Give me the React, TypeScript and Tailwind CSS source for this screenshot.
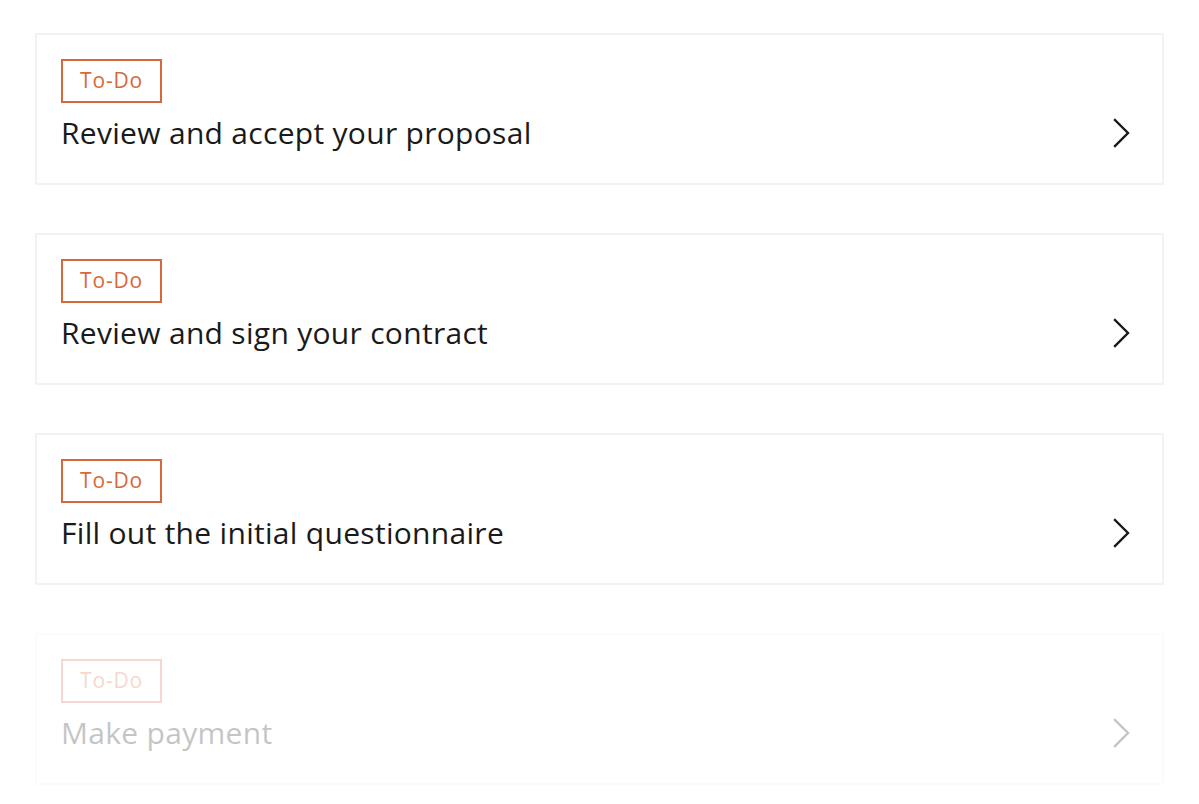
import React from 'react';

type Task = { title: string; disabled?: boolean };

const tasks: Task[] = [
  { title: 'Review and accept your proposal' },
  { title: 'Review and sign your contract' },
  { title: 'Fill out the initial questionnaire' },
  { title: 'Make payment', disabled: true },
];

const Chevron = () => (
  <svg width="20" height="30" viewBox="0 0 20 30" fill="none" className="shrink-0">
    <path d="M3 2 L16 15 L3 28" stroke="#1a1a1a" strokeWidth="2.4" strokeLinecap="square" />
  </svg>
);

const TaskCard = ({ task }: { task: Task }) => (
  <div
    className={
      'border-2 border-[#f2f2f2] bg-white h-[152px] pl-6 pr-[30px] pt-6 ' +
      (task.disabled ? 'opacity-25' : '')
    }
  >
    <div className="w-[101px] h-[44px] border-2 border-[#d6683d] flex items-center justify-center text-[21px] tracking-[0.8px] text-[#d6683d]">
      To-Do
    </div>
    <div className="flex items-center justify-between mt-[10px]">
      <span className="text-[30px] leading-[40px] tracking-[0.3px] text-[#1a1a1a]">{task.title}</span>
      <Chevron />
    </div>
  </div>
);

export default function App() {
  return (
    <div
      className="min-h-screen bg-white px-[35px] pt-[33px] flex flex-col gap-[48px]"
      style={{ fontFamily: '"Open Sans", "Noto Sans", sans-serif' }}
    >
      {tasks.map((t) => (
        <TaskCard key={t.title} task={t} />
      ))}
    </div>
  );
}
